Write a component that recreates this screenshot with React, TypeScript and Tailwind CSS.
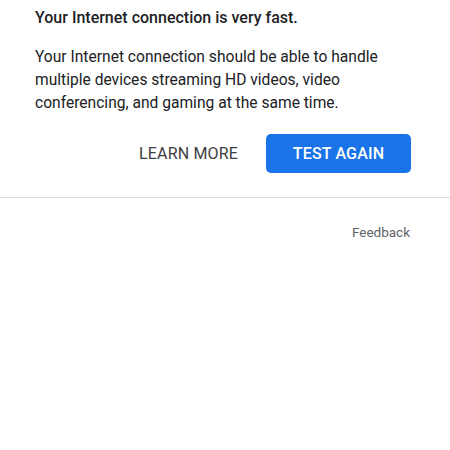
export default function App() {
  return (
    <div className="w-[450px] h-[450px] bg-white font-['Roboto',sans-serif] overflow-hidden">
      <div className="px-[35px] pt-[8px]">
        <h2 className="text-[16px] leading-[20px] font-medium text-[#202124]">
          Your Internet connection is very fast.
        </h2>
        <p className="mt-[18px] text-[15.6px] leading-[23px] text-[#202124]">
          Your Internet connection should be able to handle multiple devices
          streaming HD videos, video conferencing, and gaming at the same time.
        </p>
        <div className="mt-[19px] flex items-center justify-end gap-[28px] pr-[4px]">
          <button className="text-[16px] text-[#3c4043] tracking-[0.01em]">
            LEARN MORE
          </button>
          <button className="w-[145px] h-[39px] rounded-[5px] bg-[#1a73e8] text-white text-[16px] font-medium tracking-[0.01em]">
            TEST AGAIN
          </button>
        </div>
      </div>
      <div className="mt-[24px] border-t border-[#dadce0]" />
      <div className="flex justify-end pr-[40px] pt-[24px]">
        <span className="text-[13.5px] text-[#5f6368]">Feedback</span>
      </div>
    </div>
  );
}
